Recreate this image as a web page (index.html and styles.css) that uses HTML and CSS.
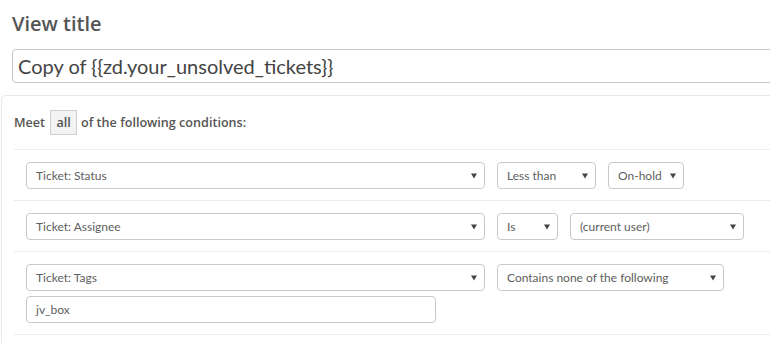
FILE: index.html
```html
<!DOCTYPE html>
<html>
<head>
<meta charset="utf-8">
<link rel="stylesheet" href="styles.css">
</head>
<body>
<div class="page">
  <h1 class="heading">View title</h1>
  <div class="title-input">Copy of {{zd.your_unsolved_tickets}}</div>
  <div class="panel">
    <div class="meet">Meet <span class="all">all</span> of the following conditions:</div>
    <div class="cond">
      <div class="line">
        <div class="sel w-field">Ticket: Status<svg class="arr" viewBox="0 0 7 6"><path d="M0 0H7L3.5 6Z"/></svg></div>
        <div class="sel w-less">Less than<svg class="arr" viewBox="0 0 7 6"><path d="M0 0H7L3.5 6Z"/></svg></div>
        <div class="sel w-hold">On-hold<svg class="arr" viewBox="0 0 7 6"><path d="M0 0H7L3.5 6Z"/></svg></div>
      </div>
    </div>
    <div class="cond">
      <div class="line">
        <div class="sel w-field">Ticket: Assignee<svg class="arr" viewBox="0 0 7 6"><path d="M0 0H7L3.5 6Z"/></svg></div>
        <div class="sel w-is">Is<svg class="arr" viewBox="0 0 7 6"><path d="M0 0H7L3.5 6Z"/></svg></div>
        <div class="sel w-user">(current user)<svg class="arr" viewBox="0 0 7 6"><path d="M0 0H7L3.5 6Z"/></svg></div>
      </div>
    </div>
    <div class="cond">
      <div class="line">
        <div class="sel w-field">Ticket: Tags<svg class="arr" viewBox="0 0 7 6"><path d="M0 0H7L3.5 6Z"/></svg></div>
        <div class="sel w-contains">Contains none of the following<svg class="arr" viewBox="0 0 7 6"><path d="M0 0H7L3.5 6Z"/></svg></div>
      </div>
      <div class="text-in">jv_box</div>
    </div>
  </div>
</div>
</body>
</html>
```
FILE: styles.css
```css
html, body {
  margin: 0;
  padding: 0;
  background: #fff;
  overflow: hidden;
}
body {
  font-family: Lato, "Open Sans", "Liberation Sans", sans-serif;
  color: #555;
}
.page {
  width: 800px;
  height: 343px;
  padding-top: 11px;
  box-sizing: border-box;
  overflow: hidden;
}
.heading {
  margin: 0 0 0 12px;
  font-family: "Open Sans", "Liberation Sans", sans-serif;
  font-size: 20px;
  font-weight: 600;
  line-height: 26px;
  color: #555;
}
.title-input {
  margin: 12px 0 0 12px;
  box-sizing: border-box;
  height: 34px;
  border: 1px solid #c8c8c8;
  border-radius: 4px;
  padding: 0 5px;
  font-size: 20px;
  line-height: 32px;
  color: #444;
}
.panel {
  margin: 12px 0 0 1px;
  border: 1px solid #e8e8e8;
  border-bottom: none;
  border-radius: 5px 0 0 0;
  padding-left: 12px;
  height: 247px;
}
.meet {
  height: 53px;
  display: flex;
  align-items: center;
  font-family: "Open Sans", "Liberation Sans", sans-serif;
  font-size: 12.6px;
  font-weight: 600;
  color: #555;
  border-bottom: 1px solid #ececec;
}
.all {
  display: inline-block;
  box-sizing: border-box;
  width: 27px;
  height: 25px;
  line-height: 23px;
  text-align: center;
  margin: 0 4px 0 5px;
  background: #f3f3f3;
  border: 1px solid #cfcfcf;
  font-weight: 600;
}
.cond {
  padding: 12px 0 11px 12px;
  border-bottom: 1px solid #ececec;
}
.line {
  display: flex;
  gap: 12px;
}
.sel, .text-in {
  position: relative;
  box-sizing: border-box;
  height: 27px;
  border: 1px solid #cacaca;
  border-radius: 4px;
  padding-left: 9px;
  font-size: 12px;
  line-height: 25px;
  color: #606060;
  white-space: nowrap;
}
.arr {
  position: absolute;
  right: 7px;
  top: 10px;
  width: 6px;
  height: 6px;
  fill: #444;
}
.w-field { width: 459px; }
.w-less { width: 99px; }
.w-hold { width: 76px; }
.w-is { width: 61px; }
.w-user { width: 174px; }
.w-contains { width: 227px; }
.text-in {
  width: 410px;
  margin-top: 5px;
}
```
